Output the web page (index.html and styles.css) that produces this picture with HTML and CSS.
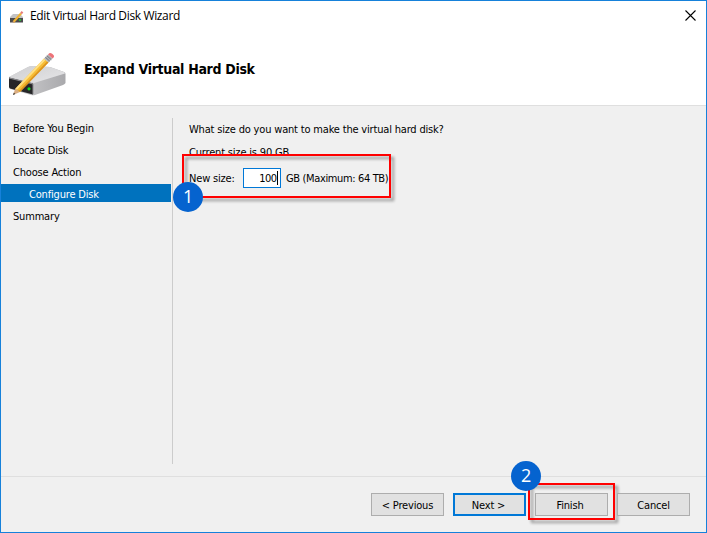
FILE: index.html
```html
<!DOCTYPE html>
<html lang="en">
<head>
<meta charset="utf-8">
<title>Edit Virtual Hard Disk Wizard</title>
<link rel="stylesheet" href="styles.css">
</head>
<body>
<svg class="defs" width="0" height="0" aria-hidden="true">
  <defs>
    <linearGradient id="top" x1="0" y1="0" x2="1" y2="1"><stop offset="0" stop-color="#cfcfd1"/><stop offset="1" stop-color="#e6e6e8"/></linearGradient>
    <linearGradient id="side" x1="0" y1="0" x2="1" y2="0"><stop offset="0" stop-color="#d2d2d4"/><stop offset="1" stop-color="#a9a9ac"/></linearGradient>
    <symbol id="disk" viewBox="0 0 60 46">
      <path d="M1 25 20 15Q22 14 25 14L42 15 56 20Q57.500 20.500 57.500 22V31Q57 32 55 33L27 43Q25 43.500 23 43L2 37Q1 36.500 1 35Z" fill="url(#side)"/>
      <path d="M1 25 20 15Q22 14 25 14L42 15 56 20Q57 20.500 57 21.500L26 31Z" fill="url(#top)"/>
      <path d="M1 25.500 25 31.500V42.500L2 36.500Q1 36 1 34.500Z" fill="#262628"/>
      <path d="M1 26 25 32V42" fill="none" stroke="#8c8c8f" stroke-width="1"/>
      <circle cx="21" cy="36.800" r="1.600" fill="#12dc20"/>
      <path d="M5 43 7.500 36 12 40Z" fill="#d9ae83"/>
      <path d="M5 43 5.800 40.700 7.300 42Z" fill="#303030"/>
      <path d="M7.500 36.500 36 6.500 40.500 10.500 12 40Z" fill="#f6bd36"/>
      <path d="M7.500 36.500 36 6.500 37.500 7.900 9 37.700Z" fill="#ffe085"/>
      <path d="M10.800 39 39.300 9.300 40.500 10.500 12 40Z" fill="#dc9420"/>
      <path d="M36 6.500 40 2.500 44.500 6.500 40.500 10.500Z" fill="#b1b3b7"/>
      <path d="m37.300 5.200 4.500 4M38.800 3.700l4.500 4" stroke="#686b70" stroke-width=".8"/>
      <path d="m40 2.500 1.200-1.200Q42.500.5 44.500 2T46 5L44.500 6.500Z" fill="#ed7378"/>
    </symbol>
  </defs>
</svg>
<div class="window">
  <header class="header">
    <div class="titlebar">
      <svg class="small-icon" viewBox="0 0 15 13">
        <path d="M1 6 4 3H11L14 6V11H1Z" fill="#c3c3c5"/>
        <path d="M1 7H14V11.500H1Z" fill="#4b4b4d"/>
        <path d="M10 9h2" stroke="#22d332" stroke-width="1.500"/>
        <path d="m4.500 11 7.500-8.500" stroke="#f1b333" stroke-width="2.200"/>
        <path d="m12 2.500 1.500-1.700" stroke="#e57a78" stroke-width="2.200"/>
        <path d="m3.500 12 .5-2.200 1.600 1.400Z" fill="#c99b70"/>
      </svg>
      <span class="caption">Edit Virtual Hard Disk Wizard</span>
      <svg class="close" viewBox="0 0 11 11"><path d="m.5.5 10 10m0-10-10 10" stroke="#000" stroke-width="1.100"/></svg>
    </div>
    <div class="banner">
      <svg class="large-icon"><use href="#disk"/></svg>
      <h1>Expand Virtual Hard Disk</h1>
    </div>
  </header>
  <div class="body">
    <nav class="steps">
      <div class="step">Before You Begin</div>
      <div class="step">Locate Disk</div>
      <div class="step">Choose Action</div>
      <div class="step active">Configure Disk</div>
      <div class="step">Summary</div>
    </nav>
    <main class="content">
      <p class="question">What size do you want to make the virtual hard disk?</p>
      <p class="current">Current size is 90 GB.</p>
      <div class="size-row">
        <label class="size-label">New size:</label>
        <div class="size-input">100<i class="caret"></i></div>
        <span class="max">GB (Maximum: 64 TB)</span>
        <div class="mark mark-size"></div>
        <b class="badge badge-size">1</b>
      </div>
    </main>
  </div>
  <footer class="footer">
    <div class="button">&lt; Previous</div>
    <div class="button primary">Next &gt;</div>
    <div class="button finish">Finish
      <div class="mark mark-finish"></div>
      <b class="badge badge-finish">2</b>
    </div>
    <div class="button">Cancel</div>
  </footer>
</div>
</body>
</html>
```
FILE: styles.css
```css
* { box-sizing: border-box; }
body { margin: 0; font: 11px/18px "DejaVu Sans Condensed", "DejaVu Sans", sans-serif; font-stretch: condensed; color: #000; letter-spacing: -.18px; }
.defs { position: absolute; }
.window { width: 707px; height: 533px; border: 1px solid #1681da; background: #f0f0f0; display: flex; flex-direction: column; }
.header { height: 105px; background: #fff; border-bottom: 1px solid #dfdfdf; }
.titlebar { height: 30px; display: flex; align-items: center; padding: 0 10px 0 8px; }
.small-icon { width: 15px; height: 13px; margin-top: 2px; }
.caption { font: 12px/16px "Open Sans", sans-serif; margin-left: 6px; letter-spacing: -.36px; }
.close { width: 11px; height: 11px; margin: -1px 0 0 auto; }
.banner { display: flex; padding: 21px 0 0 7px; }
.large-icon { width: 60px; height: 46px; }
h1 { margin: 8px 0 0 16px; font: bold 14px/18px "DejaVu Sans Condensed", "DejaVu Sans", sans-serif; font-stretch: condensed; letter-spacing: -.31px; }
.body { height: 370px; display: flex; padding-top: 12px; }
.steps { width: 172px; height: 346px; border-right: 1px solid #ccc; display: flex; flex-direction: column; gap: 4px; }
.step { height: 18px; line-height: 21px; padding-left: 12px; width: 170px; white-space: nowrap; }
.active { background: #0072be; color: #fff; padding-left: 28px; }
.content { padding: 3px 0 0 16px; white-space: nowrap; }
p { margin: 0; }
.question { height: 23px; }
.current { height: 10px; overflow: hidden; }
.size-row { position: relative; display: flex; align-items: center; height: 20px; margin-top: 14px; }
.size-label { width: 54px; padding-top: 1px; }
.size-input { width: 38px; height: 20px; border: 1px solid #0078d7; background: #fff; display: flex; justify-content: flex-end; align-items: center; padding: 1px 2px 0 0; letter-spacing: -.6px; }
.caret { width: 1px; height: 14px; margin: -1px 0 0 .6px; background: #000; }
.max { margin-left: 5px; padding-top: 1px; letter-spacing: -.36px; }
.mark { position: absolute; border: 2px solid #f00; filter: drop-shadow(3px 3px 1.5px rgba(0,0,0,.4)); }
.mark-size { left: -7px; top: -14px; width: 209px; height: 44px; }
.badge { position: absolute; width: 30px; height: 30px; border-radius: 50%; background: #0563cf; color: #fff; font: 18px/29px "Open Sans", sans-serif; text-align: center; }
.badge-size { left: -16px; top: 14px; }
.footer { height: 56px; border-top: 1px solid #dfdfdf; display: flex; justify-content: flex-end; gap: 9px; padding: 16px 16px 0 0; }
.button { position: relative; width: 73px; height: 23px; border: 1px solid #adadad; background: #e1e1e1; text-align: center; line-height: 23px; white-space: nowrap; }
.primary { border: 2px solid #0078d7; line-height: 21px; padding-right: 2px; }
.finish { padding-right: 3px; }
.mark-finish { left: -8px; top: -11px; width: 87px; height: 37px; }
.badge-finish { left: -25px; top: -33px; }
```
